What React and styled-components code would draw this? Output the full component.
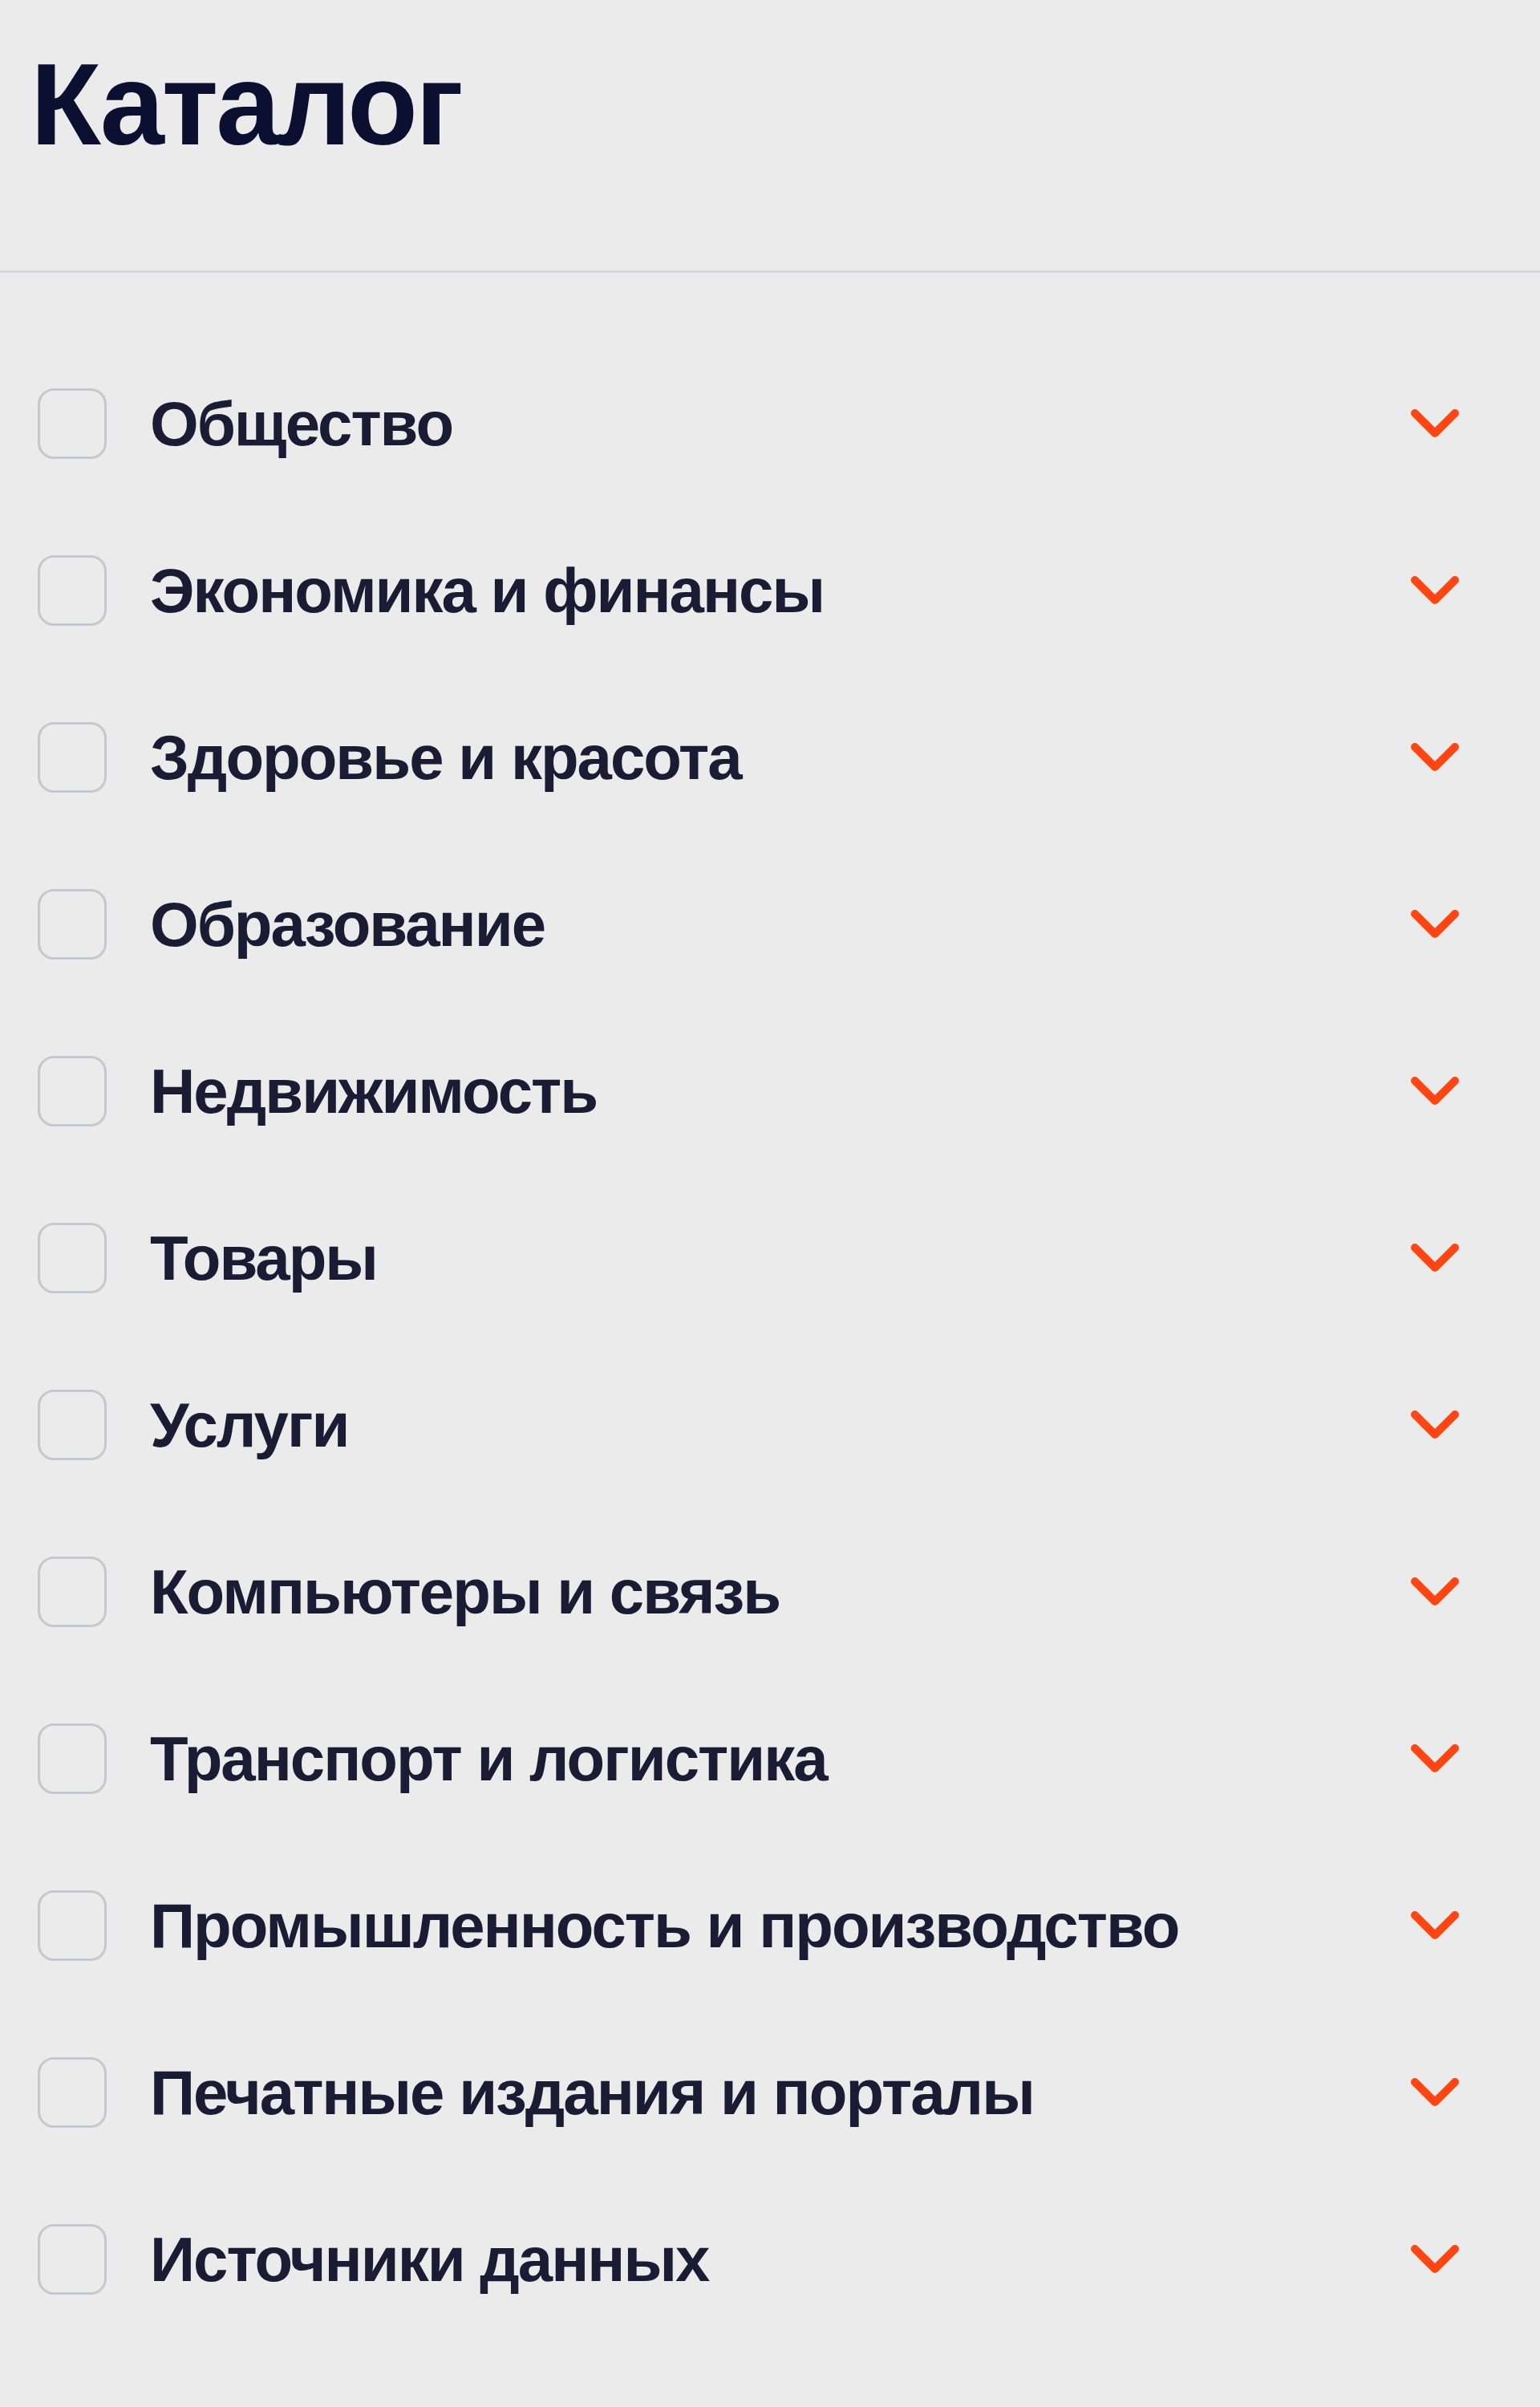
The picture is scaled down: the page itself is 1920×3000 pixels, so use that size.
import React from 'react';
import styled, { createGlobalStyle } from 'styled-components';

const GlobalStyle = createGlobalStyle`
  html, body {
    margin: 0;
    padding: 0;
    background: #ebebeb;
  }
  body {
    font-family: "Liberation Sans", Arial, sans-serif;
  }
`;

// Список разделов каталога
const categories = [
  'Общество',
  'Экономика и финансы',
  'Здоровье и красота',
  'Образование',
  'Недвижимость',
  'Товары',
  'Услуги',
  'Компьютеры и связь',
  'Транспорт и логистика',
  'Промышленность и производство',
  'Печатные издания и порталы',
  'Источники данных',
];

const Page = styled.div`
  width: 1920px;
  min-height: 3000px;
  background: #ebebeb;
`;

const Header = styled.header`
  height: 340px;
  padding: 59px 0 0 38px;
  box-sizing: border-box;
  border-bottom: 3px solid #d6d6db;
`;

const Title = styled.h1`
  margin: 0;
  font-family: "Liberation Sans", Arial, sans-serif;
  font-size: 144px;
  line-height: 1;
  font-weight: 700;
  color: #0b1030;
  letter-spacing: -3px;
`;

const List = styled.ul`
  list-style: none;
  margin: 0;
  padding: 84px 0 0;
`;

const Row = styled.li`
  display: flex;
  align-items: center;
  height: 208px;
  padding: 0 100px 0 47px;
  cursor: pointer;
`;

const Box = styled.span`
  flex: none;
  width: 80px;
  height: 82px;
  border: 3px solid #c7c7d0;
  border-radius: 20px;
  margin-right: 54px;
`;

const Label = styled.span`
  flex: 1;
  font-size: 78px;
  font-weight: 700;
  color: #1a1c33;
  letter-spacing: -2px;
`;

const Chevron = () => (
  <svg width="62" height="38" viewBox="0 0 62 38" fill="none">
    <polyline
      points="6,6 31,31 56,6"
      stroke="#ff4614"
      strokeWidth="10"
      strokeLinecap="round"
      strokeLinejoin="round"
    />
  </svg>
);

const App = () => (
  <Page>
    <GlobalStyle />
    <Header>
      <Title>Каталог</Title>
    </Header>
    <List>
      {categories.map((name) => (
        <Row key={name}>
          <Box />
          <Label>{name}</Label>
          <Chevron />
        </Row>
      ))}
    </List>
  </Page>
);

export default App;
